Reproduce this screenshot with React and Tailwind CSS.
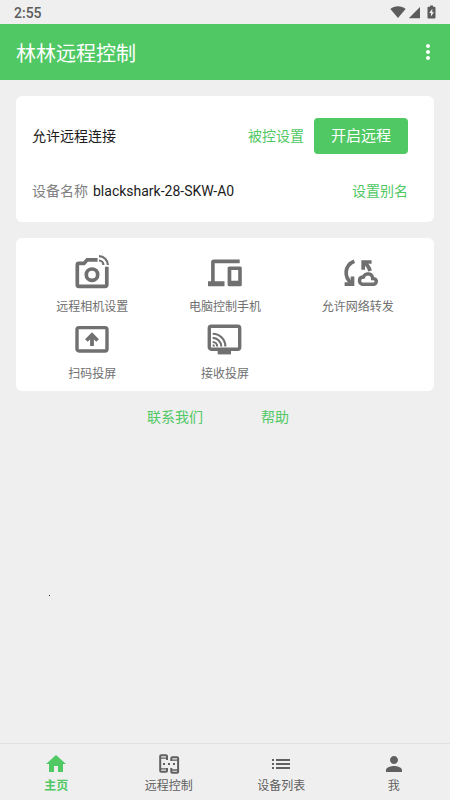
import React from "react";
import { MdHome, MdList, MdMoreVert, MdPerson } from "react-icons/md";

const CameraIcon = () => (
  <svg viewBox="0 0 40 40" className="w-10 h-10" fill="none" stroke="currentColor" strokeWidth="3.7">
    <path d="M25.6 7.8H15.2l-3.2 3.6H6.8a1.5 1.5 0 0 0-1.5 1.5v19.9a1.5 1.5 0 0 0 1.5 1.5h26.5a1.5 1.5 0 0 0 1.5-1.5V14.7" />
    <circle cx="20" cy="22.7" r="5.7" />
    <path d="M27 4.100a9 9 0 0 1 8.900 8.800M27 8.500a4.500 4.500 0 0 1 4.400 4.400" strokeWidth="2.2" />
  </svg>
);

const DevicesIcon = () => (
  <svg viewBox="0 0 40 40" className="w-10 h-10" fill="currentColor">
    <path d="M34.700 7.500H8.800a2.700 2.700 0 0 0-2.700 2.700v19.100H3V34.300h16.500v-5H9.700V11.200h25z" />
    <path
      fillRule="evenodd"
      d="M24.100 14.500h11.200a1.500 1.500 0 0 1 1.500 1.500v16.800a1.500 1.500 0 0 1-1.500 1.500H24.100a1.500 1.500 0 0 1-1.500-1.500V16a1.500 1.500 0 0 1 1.500-1.500zm2.200 3.600v10.600h6.900V18.100z"
    />
  </svg>
);

const ForwardIcon = () => (
  <svg viewBox="0 0 40 40" className="w-10 h-10" fill="none" stroke="currentColor" strokeWidth="3.7">
    <path d="M16.300 9.200C6 13.500 5.800 25.500 13.800 31.500" />
    <path d="M6.600 32.200H14.500V24.600" />
    <path d="M33.600 10H25.200V17.800" />
    <path d="M26 10.600C29.200 12.500 31.200 15.300 32 19" />
    <path
      transform="translate(20.400 17.600) scale(0.79)"
      fill="currentColor"
      strokeWidth="1.6"
      d="M19.350 10.040A7.490 7.490 0 0 0 12 4C9.110 4 6.600 5.640 5.350 8.040A5.994 5.994 0 0 0 0 14c0 3.310 2.690 6 6 6h13c2.760 0 5-2.240 5-5 0-2.640-2.050-4.780-4.650-4.960zM19 17.200H6c-2 0-3.200-1.400-3.200-3.200S4 10.800 6 10.800h1.300C7.800 8.300 9.600 6.800 12 6.800c2.800 0 4.700 2.100 4.700 4.700v1.300H19c1.400 0 2.200 1 2.200 2.200s-.8 2.200-2.200 2.200z"
    />
  </svg>
);

const ScanIcon = () => (
  <svg viewBox="0 0 40 40" className="w-10 h-10" fill="none" stroke="currentColor" strokeWidth="3.4">
    <rect x="5" y="8.600" width="30" height="23.400" rx="2" />
    <path d="M20 27V15.500M14.400 21.500l5.600-5.600 5.600 5.600" strokeWidth="3.8" />
  </svg>
);

const CastIcon = () => (
  <svg viewBox="0 0 40 40" className="w-10 h-10" fill="none" stroke="currentColor" strokeWidth="3.4">
    <rect x="4.300" y="7.200" width="30.400" height="23" rx="2" />
    <path d="M12.700 33.500H26" strokeWidth="3.8" />
    <path
      d="M7.700 23a4.500 4.500 0 0 1 4.500 4.500M7.700 18.900a8.600 8.600 0 0 1 8.600 8.600M7.700 14.800a12.700 12.700 0 0 1 12.700 12.700"
      strokeWidth="2.1"
    />
    <path d="M7.700 25.200a2.300 2.300 0 0 1 2.300 2.300H7.700z" fill="currentColor" stroke="none" />
  </svg>
);

const PhonesIcon = () => (
  <svg viewBox="0 0 24 24" className="w-6 h-6" fill="none" stroke="currentColor" strokeWidth="2">
    <path d="M10 8V4.300a1 1 0 0 0-1-1H4.200a1 1 0 0 0-1 1v14.400a1 1 0 0 0 1 1H9a1 1 0 0 0 1-1V16" />
    <path d="M3.200 6.100H10M3.200 16.900H10" strokeWidth="1.4" />
    <path d="M14.300 9V6.300a1 1 0 0 1 1-1h4.800a1 1 0 0 1 1 1v13.400a1 1 0 0 1-1 1h-4.800a1 1 0 0 1-1-1V16" />
    <path d="M14.300 8.100h6.800M14.300 18h6.800" strokeWidth="1.4" />
    <path d="M6 12h2M11 12h2M16 12h2" />
  </svg>
);

const StatusIcons = () => (
  <svg viewBox="0 0 46 14" className="w-[46px] h-[14px]" fill="currentColor">
    <path d="M.4 4C4.4.3 11.6.3 15.600 4L8 13z" />
    <path d="M30 2v11.200H18.800z" />
    <path
      fillRule="evenodd"
      d="M40 .5h3v1.300h1.500a1 1 0 0 1 1 1v9.700a1 1 0 0 1-1 1h-6a1 1 0 0 1-1-1V2.800a1 1 0 0 1 1-1H40zM42.300 3.800L39.200 8h1.700v3.600L44 7.200h-1.700z"
    />
  </svg>
);

const features = [
  { label: "远程相机设置", Icon: CameraIcon },
  { label: "电脑控制手机", Icon: DevicesIcon },
  { label: "允许网络转发", Icon: ForwardIcon },
  { label: "扫码投屏", Icon: ScanIcon },
  { label: "接收投屏", Icon: CastIcon },
];

const HomeIcon = () => <MdHome className="w-6 h-6" />;
const ListIcon = () => <MdList className="w-6 h-6" />;
const PersonIcon = () => <MdPerson className="w-6 h-6" />;

const tabs = [
  { label: "主页", Icon: HomeIcon, active: true },
  { label: "远程控制", Icon: PhonesIcon },
  { label: "设备列表", Icon: ListIcon },
  { label: "我", Icon: PersonIcon },
];

const App = () => {
  return (
    <div className="min-h-screen flex flex-col bg-[#efefef] text-sm leading-5 text-[#1c1c1c] font-[Roboto,'Noto_Sans_CJK_SC',sans-serif]">
      <div className="h-6 px-[14px] flex items-center justify-between text-[#5c5c5c]">
        <span className="font-medium pt-[2px]">2:55</span>
        <StatusIcons />
      </div>

      <header className="h-14 pl-4 pr-[10px] flex items-center justify-between bg-[#50c864] text-white">
        <h1 className="text-xl pt-[3px]">林林远程控制</h1>
        <button type="button" aria-label="更多">
          <MdMoreVert className="w-6 h-6" />
        </button>
      </header>

      <main className="flex-1 p-4">
        <section className="bg-white rounded-md pt-[22px] pb-[21px] pl-4 pr-[26px]">
          <div className="flex items-center">
            <span>允许远程连接</span>
            <button type="button" className="ml-auto text-[#50c864]">
              被控设置
            </button>
            <button
              type="button"
              className="ml-[10px] h-9 px-[17px] rounded-[4px] bg-[#50c864] text-white text-[15px]"
            >
              开启远程
            </button>
          </div>
          <div className="mt-[27px] flex items-center">
            <span className="text-[#808080]">设备名称</span>
            <span className="ml-[5px]">blackshark-28-SKW-A0</span>
            <button type="button" className="ml-auto text-[#50c864]">
              设置别名
            </button>
          </div>
        </section>

        <section className="mt-4 bg-white rounded-md px-[10px] pt-[14px] pb-2 grid grid-cols-3 gap-y-[3px]">
          {features.map(({ label, Icon }) => (
            <button
              key={label}
              type="button"
              className="flex flex-col items-center gap-[6px] text-xs leading-[18px] text-[#707070]"
            >
              <Icon />
              {label}
            </button>
          ))}
        </section>

        <div className="mt-4 pr-[14px] flex justify-center gap-[58px] text-[#50c864]">
          <a href="#contact">联系我们</a>
          <a href="#help">帮助</a>
        </div>
        <div className="mt-[168px] ml-[33px] w-px h-px bg-[#3a2020]"></div>
      </main>

      <nav className="flex h-[57px] border-t border-[#e2e2e2]">
        {tabs.map(({ label, Icon, active }) => (
          <button
            key={label}
            type="button"
            className={`flex-1 pt-2 flex flex-col items-center gap-px text-xs leading-[18px] ${
              active ? "text-[#50c864] font-bold" : "text-[#606060]"
            }`}
          >
            <Icon />
            {label}
          </button>
        ))}
      </nav>
    </div>
  );
};

export default App;
